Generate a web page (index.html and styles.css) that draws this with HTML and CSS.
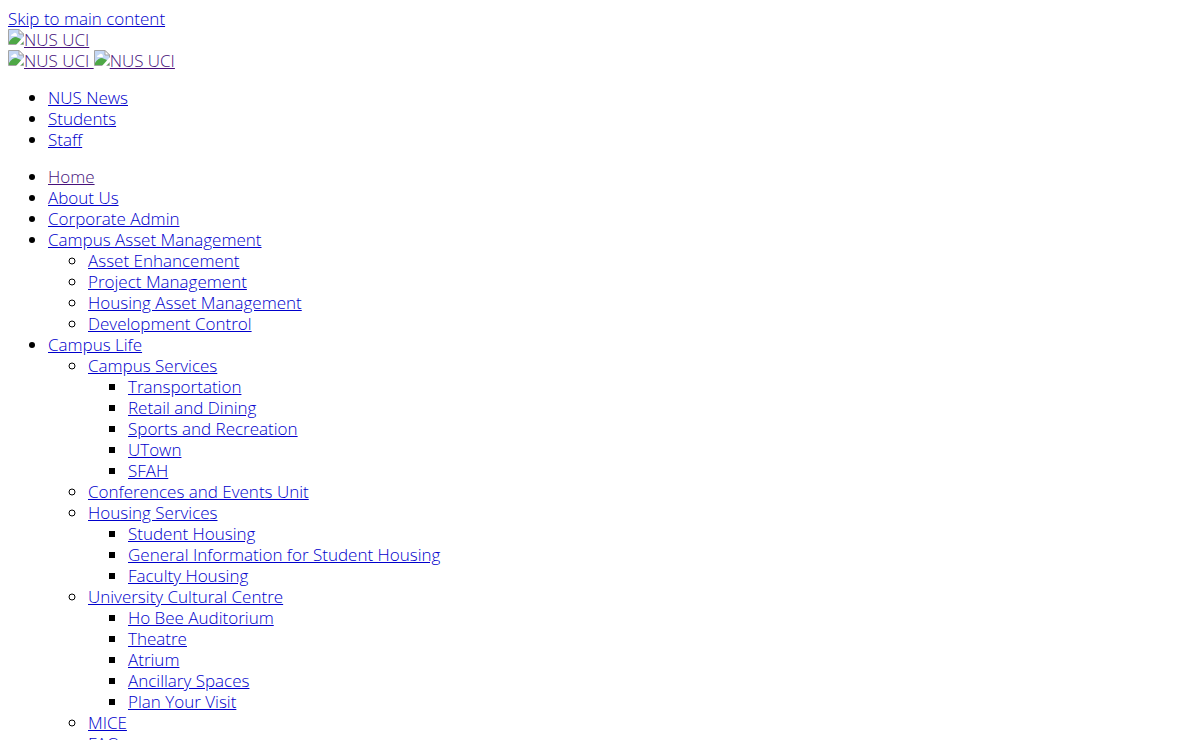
FILE: index.html
```html
<!DOCTYPE html>
<html lang="en">
<head>
    <meta charset="UTF-8">
    <meta name="viewport" content="width=device-width, initial-scale=1.0">
    <title>NUS UCI</title>
    <link rel="stylesheet" href="styles.css">
</head>
<body>
    <!-- Shared placeholder icon for the logos -->
    <svg class="icon-defs" aria-hidden="true">
        <symbol id="logo-icon" viewBox="0 0 16 16">
            <path d="M.5 .5H11L15.500 5V15.500H.5Z" fill="#c4d7f5" stroke="#a4a4a4"/>
            <path d="M3 7Q3 5 5 5Q6 3 8 4Q9 5 9 7Z" fill="#fff"/>
            <path d="M1 15V13Q4 8 8 8Q12 9 15 12V15Z" fill="#4ea846"/>
            <path d="M11 .5V5H15.500Z" fill="#fff" stroke="#a4a4a4"/>
            <path d="M16 7L8 16H12L16 12Z" fill="#fff"/>
        </symbol>
    </svg>

    <a href="#main-content">Skip to main content</a>

    <header>
        <div>
            <a href="#" class="visited"><svg class="logo-icon" aria-hidden="true"><use href="#logo-icon"/></svg>NUS UCI</a>
        </div>
        <div>
            <a href="#" class="visited"><svg class="logo-icon" aria-hidden="true"><use href="#logo-icon"/></svg>NUS UCI </a><a href="#" class="visited"><svg class="logo-icon" aria-hidden="true"><use href="#logo-icon"/></svg>NUS UCI</a>
        </div>
    </header>

    <ul>
        <li><a href="#news">NUS News</a></li>
        <li><a href="#students">Students</a></li>
        <li><a href="#staff">Staff</a></li>
    </ul>

    <!-- Main Navigation -->
    <nav>
        <ul>
            <li><a href="#" class="visited">Home</a></li>
            <li><a href="#about">About Us</a></li>
            <li><a href="#corporate">Corporate Admin</a></li>
            <li><a href="#asset-management">Campus Asset Management</a>
                <ul>
                    <li><a href="#enhancement">Asset Enhancement</a></li>
                    <li><a href="#project">Project Management</a></li>
                    <li><a href="#housing-asset">Housing Asset Management</a></li>
                    <li><a href="#development">Development Control</a></li>
                </ul>
            </li>
            <li><a href="#campus-life">Campus Life</a>
                <ul>
                    <li><a href="#services">Campus Services</a>
                        <ul>
                            <li><a href="#transportation">Transportation</a></li>
                            <li><a href="#retail">Retail and Dining</a></li>
                            <li><a href="#sports">Sports and Recreation</a></li>
                            <li><a href="#utown">UTown</a></li>
                            <li><a href="#sfah">SFAH</a></li>
                        </ul>
                    </li>
                    <li><a href="#conferences">Conferences and Events Unit</a></li>
                    <li><a href="#housing">Housing Services</a>
                        <ul>
                            <li><a href="#student-housing">Student Housing</a></li>
                            <li><a href="#housing-info">General Information for Student Housing</a></li>
                            <li><a href="#faculty-housing">Faculty Housing</a></li>
                        </ul>
                    </li>
                    <li><a href="#ucc">University Cultural Centre</a>
                        <ul>
                            <li><a href="#auditorium">Ho Bee Auditorium</a></li>
                            <li><a href="#theatre">Theatre</a></li>
                            <li><a href="#atrium">Atrium</a></li>
                            <li><a href="#ancillary">Ancillary Spaces</a></li>
                            <li><a href="#visit">Plan Your Visit</a></li>
                        </ul>
                    </li>
                    <li><a href="#mice">MICE</a></li>
                    <li><a href="#faq">FAQ</a></li>
                </ul>
            </li>
        </ul>
    </nav>
</body>
</html>
```
FILE: styles.css
```css
body {
    margin: 8px;
    font-family: 'Open Sans', 'Noto Sans', sans-serif;
    font-size: 17px;
    font-weight: 300;
    line-height: 21px;
    color: #000;
    background: #fff;
}

ul {
    margin: 16px 0;
}

ul ul {
    margin: 0;
}

a {
    color: #0000cc;
}

a.visited {
    color: #46107a;
}

.icon-defs {
    display: none;
}

.logo-icon {
    width: 16px;
    height: 16px;
    margin-top: -1px;
    vertical-align: 1px;
}
```
